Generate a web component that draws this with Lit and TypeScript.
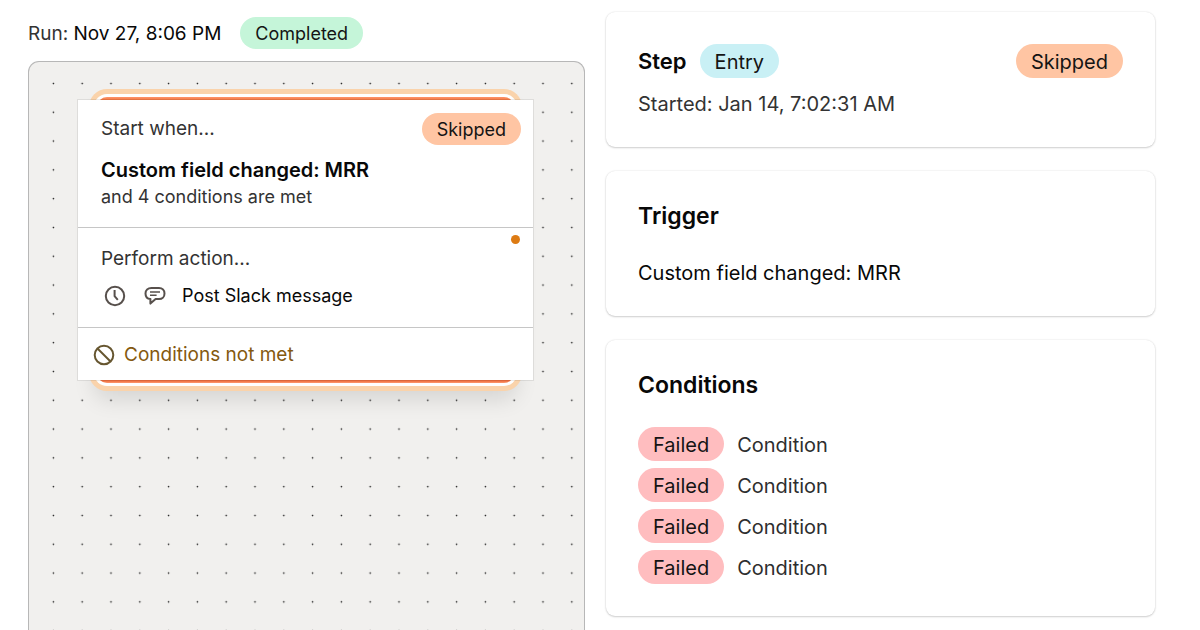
import { LitElement, html, css, svg } from "lit";
import { customElement, property } from "lit/decorators.js";

@customElement("status-badge")
class StatusBadge extends LitElement {
  @property({ reflect: true }) tone = "orange";

  static styles = css`
    :host {
      display: inline-flex;
      align-items: center;
      box-sizing: border-box;
      padding: 2px 15px 0;
      height: 32px;
      border-radius: 17px;
      color: #141414;
      font-size: 18px;
      white-space: nowrap;
      background: #ffc5a3;
    }
    :host([tone="green"]) { background: #c5f5d9; }
    :host([tone="cyan"]) { background: #c9f0f5; }
    :host([tone="red"]) { background: #ffbdbf; }
    :host([large]) { height: 34px; font-size: 20px; }
  `;

  render() {
    return html`<slot></slot>`;
  }
}

const clockIcon = svg`<svg width="22" height="22" viewBox="0 0 22 22" fill="none" stroke="#57504c" stroke-width="2" aria-hidden="true">
  <circle cx="11" cy="11" r="9.2"/><path d="M10.6 5v6.2l3.2 3.6"/></svg>`;

const chatIcon = svg`<svg width="22" height="22" viewBox="0 0 22 22" fill="none" stroke="#57504c" stroke-width="2" stroke-linejoin="round" aria-hidden="true">
  <path d="M7.4 2.9h7.6c3.300 0 5.500 2.200 5.500 5.500s-2.200 5.600-5.500 5.600h-3.400L6.400 18.600V14C3.300 13.700 1.500 11.500 1.500 8.400c0-3.300 2.400-5.500 5.900-5.500z"/>
  <path d="M6 7h10M6 10.200h6.600" stroke-width="1.600"/></svg>`;

const banIcon = svg`<svg width="22" height="22" viewBox="0 0 22 22" fill="none" stroke="#665630" stroke-width="2" aria-hidden="true">
  <circle cx="11" cy="11" r="9.300"/><path d="M4.500 4.500l13 13"/></svg>`;

@customElement("app-root")
class AppRoot extends LitElement {
  private conditions = ["Condition", "Condition", "Condition", "Condition"];

  static styles = css`
    :host {
      display: block;
      height: 100vh;
      overflow: hidden;
      box-sizing: border-box;
      padding: 0 45px 0 28px;
      background: #fff;
      color: #080808;
      font-family: Inter, "Liberation Sans", sans-serif;
      font-size: 19px;
      line-height: 26px;
    }
    h2, h3, p, ul { margin: 0; padding: 0; list-style: none; }
    svg { display: block; flex: none; }
    .page {
      display: grid;
      grid-template-columns: 557fr 549fr;
      gap: 21px;
      height: 100%;
    }
    .run {
      display: flex;
      flex-direction: column;
      gap: 12px;
      padding-top: 17px;
    }
    .run-head { display: flex; align-items: center; gap: 19px; }
    .run-head p { padding-top: 2px; }
    .muted { color: #333; }
    .canvas {
      position: relative;
      flex: 1;
      padding: 37px 50px 0 48px;
      border: 1px solid #b7b7b7;
      border-bottom: 0;
      border-radius: 11px 11px 0 0;
      background: #f1f0ee;
      overflow: hidden;
    }
    .dots { position: absolute; inset: 0; width: 100%; height: 100%; }
    .node { position: relative; }
    .halo {
      position: absolute;
      inset: -2px 20px;
      border-radius: 10px;
      background: linear-gradient(#ff9468, #f47742 3px, #ee6f40 calc(100% - 2px), #ff9a70);
      box-shadow: 0 0 0 3px #fff, 0 0 0 8px #fad3ab, 0 14px 22px 2px rgba(0, 0, 0, 0.12);
    }
    .card {
      position: relative;
      border: 1px solid rgba(0, 0, 0, 0.08);
      background: #fff;
      background-clip: padding-box;
    }
    .part + .part { border-top: 1px solid #c6c6c6; }
    .trigger { padding: 13px 12px 17px 23px; }
    .trigger-head {
      display: flex;
      align-items: center;
      justify-content: space-between;
      margin-bottom: 12px;
    }
    .title { font-size: 20px; font-weight: 600; }
    .summary { padding-top: 1px; font-size: 18px; }
    .action { position: relative; padding: 18px 23px; }
    .action-row {
      display: flex;
      align-items: center;
      gap: 18px;
      margin-top: 11px;
      padding-left: 3px;
      font-size: 18px;
    }
    .action-row p { margin-left: -2px; }
    .marker {
      position: absolute;
      top: 7px;
      right: 13px;
      width: 9px;
      height: 9px;
      border-radius: 50%;
      background: #dd7b13;
    }
    .result {
      display: flex;
      align-items: center;
      gap: 9px;
      padding: 13px 15px 12px;
      color: #84590f;
    }
    .result p { padding-top: 1px; }
    .details {
      display: flex;
      flex-direction: column;
      gap: 24px;
      padding-top: 12px;
      font-size: 20px;
      line-height: 22px;
    }
    .panel {
      padding: 32px;
      border-radius: 9px;
      background: #fff;
      box-shadow: 0 0 2px rgba(0, 0, 0, 0.12), 0 1px 2px rgba(0, 0, 0, 0.17);
    }
    .panel h2 { font-size: 23px; font-weight: 600; line-height: 27px; }
    .panel .step { font-size: 22px; }
    .step-head { display: flex; align-items: center; gap: 13px; margin-bottom: 15px; }
    .push { margin-left: auto; }
    .trigger-text { margin-top: 32px; }
    .conditions { display: grid; gap: 7px; margin-top: 28px; }
    .conditions li { display: flex; align-items: center; gap: 13px; color: #2e2e2e; }
    .conditions p { padding-top: 2px; }
  `;

  render() {
    return html`
      <main class="page">
        <section class="run">
          <header class="run-head">
            <p><span class="muted">Run:</span> Nov 27, 8:06 PM</p>
            <status-badge tone="green">Completed</status-badge>
          </header>
          <div class="canvas">
            <svg class="dots" aria-hidden="true">
              <defs>
                <pattern id="dot-grid" x="10" y="8" width="28.8" height="28.8" patternUnits="userSpaceOnUse">
                  <circle cx="14.4" cy="13.5" r="0.8" fill="#111" />
                </pattern>
              </defs>
              <rect width="100%" height="100%" fill="url(#dot-grid)" />
            </svg>
            <article class="node">
              <div class="halo"></div>
              <div class="card">
                <div class="part trigger">
                  <div class="trigger-head">
                    <p class="muted">Start when...</p>
                    <status-badge>Skipped</status-badge>
                  </div>
                  <h3 class="title">Custom field changed: MRR</h3>
                  <p class="muted summary">and 4 conditions are met</p>
                </div>
                <div class="part action">
                  <span class="marker"></span>
                  <p class="muted">Perform action...</p>
                  <div class="action-row">${clockIcon}${chatIcon}<p>Post Slack message</p></div>
                </div>
                <div class="part result">${banIcon}<p>Conditions not met</p></div>
              </div>
            </article>
          </div>
        </section>
        <section class="details">
          <article class="panel">
            <div class="step-head">
              <h2 class="step">Step</h2>
              <status-badge tone="cyan" large>Entry</status-badge>
              <status-badge class="push" large>Skipped</status-badge>
            </div>
            <p class="muted">Started: Jan 14, 7:02:31 AM</p>
          </article>
          <article class="panel">
            <h2>Trigger</h2>
            <p class="trigger-text">Custom field changed: MRR</p>
          </article>
          <article class="panel">
            <h2>Conditions</h2>
            <ul class="conditions">
              ${this.conditions.map(
                (name) => html`<li><status-badge tone="red" large>Failed</status-badge><p>${name}</p></li>`
              )}
            </ul>
          </article>
        </section>
      </main>
    `;
  }
}
